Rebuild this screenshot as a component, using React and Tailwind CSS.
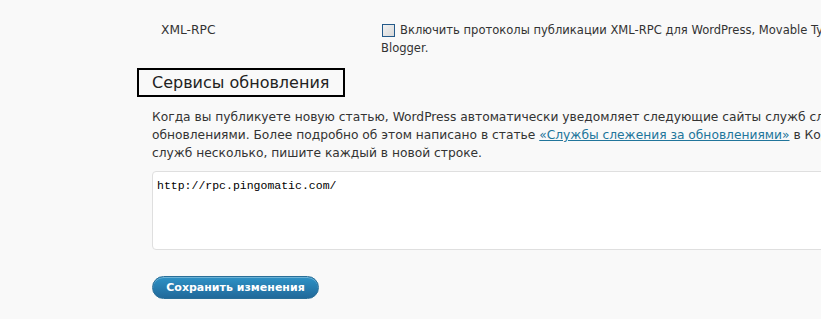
export default function App() {
  return (
    <div className="w-[821px] h-[319px] overflow-hidden bg-[#f9f9f9] text-[#333] font-['DejaVu_Sans','Verdana',sans-serif] text-[12.25px] leading-[18px]">
      <div className="flex pt-[21px] whitespace-nowrap">
        <div className="w-[382px] shrink-0 pl-[161px]">XML-RPC</div>
        <div className="text-[11.55px]">
          <div className="flex items-center">
            <span className="w-[13px] h-[13px] shrink-0 border border-[#245a8a] bg-gradient-to-br from-[#f2f2f2] to-[#d8d8d8] mr-[5px]" />
            <span>Включить протоколы публикации XML-RPC для WordPress, Movable Type, MetaWeblog и</span>
          </div>
          <div className="-ml-[1px]">Blogger.</div>
        </div>
      </div>

      <div className="ml-[137px] mt-[11px] w-[208px] h-[29px] border-2 border-black flex items-center pl-[13px] text-[16px] text-[#222]">
        Сервисы обновления
      </div>

      <div className="ml-[152px] mt-[11px] whitespace-nowrap">
        <div>Когда вы публикуете новую статью, WordPress автоматически уведомляет следующие сайты служб слежения за</div>
        <div>
          обновлениями. Более подробно об этом написано в статье{" "}
          <a href="#" className="text-[#21759b] underline">«Службы слежения за обновлениями»</a> в Кодексе. Если сайтов
        </div>
        <div>служб несколько, пишите каждый в новой строке.</div>
      </div>

      <div className="ml-[152px] mt-[9px] w-[720px] h-[79px] bg-white border border-[#dfdfdf] rounded-[4px] px-[4px] pt-[5px] font-['Liberation_Mono',monospace] text-[11.5px] text-black">
        http://rpc.pingomatic.com/
      </div>

      <button className="ml-[152px] mt-[26px] w-[167px] h-[23px] rounded-full bg-gradient-to-b from-[#2e92c6] to-[#21699a] border border-[#2a6f98] text-white font-bold text-[11px] leading-none shadow-[inset_0_1px_0_rgba(255,255,255,0.3)]">
        Сохранить изменения
      </button>
    </div>
  );
}
